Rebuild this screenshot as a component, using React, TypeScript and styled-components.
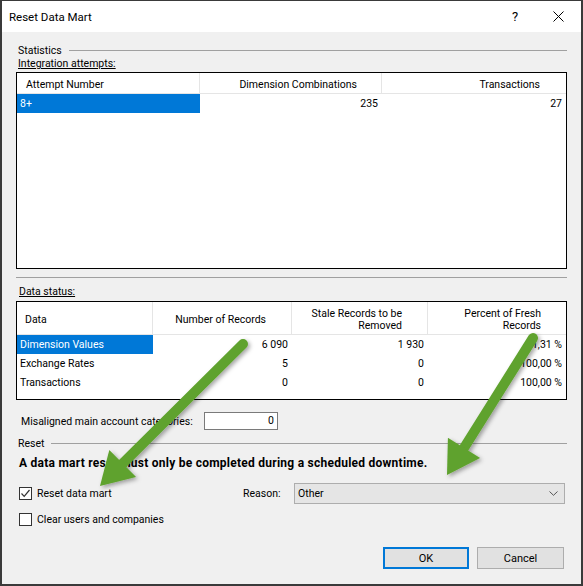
import React from "react";
import styled, { createGlobalStyle } from "styled-components";

const GlobalStyle = createGlobalStyle`
  html, body {
    margin: 0;
    padding: 0;
    background: #f0f0f0;
  }
  body {
    font-family: Roboto, "Noto Sans", sans-serif;
  }
`;

const UI_FONT = `Roboto, "Noto Sans", "Liberation Sans", sans-serif`;

const Window = styled.div`
  position: relative;
  width: 583px;
  height: 586px;
  box-sizing: border-box;
  border: 1px solid #3a3a3a;
  border-left-width: 2px;
  border-right-width: 2px;
  border-bottom-width: 2px;
  background: #f0f0f0;
  display: flex;
  flex-direction: column;
  overflow: hidden;
  font-family: ${UI_FONT};
  font-size: 10.5px;
  color: #000;
`;

const TitleBar = styled.div`
  height: 31px;
  flex: none;
  background: #fff;
  display: flex;
  align-items: center;
  padding-left: 7px;
`;

const TitleText = styled.div`
  flex: 1;
  font-size: 11.5px;
`;

const CaptionButton = styled.div<{ $w: number }>`
  width: ${(p) => p.$w}px;
  height: 31px;
  display: flex;
  align-items: center;
  justify-content: center;
  font-size: 13px;
`;

const Body = styled.div`
  flex: 1;
  display: flex;
  flex-direction: column;
  padding: 11px 14px 0 14px;
`;

const GroupHeading = styled.div<{ $mt?: number }>`
  display: flex;
  align-items: center;
  height: 14px;
  padding-left: 2px;
  margin-top: ${(p) => p.$mt ?? 0}px;
`;

const Rule = styled.div`
  flex: 1;
  height: 1px;
  background: #a0a0a0;
  margin-left: 7px;
`;

const Separator = styled.div<{ $mt: number }>`
  height: 1px;
  background: #a0a0a0;
  margin-top: ${(p) => p.$mt}px;
`;

const SubLabel = styled.div<{ $mt?: number; $pl?: number }>`
  height: 13px;
  line-height: 13px;
  padding-left: ${(p) => p.$pl ?? 2}px;
  margin-top: ${(p) => p.$mt ?? 0}px;
  text-decoration: underline;
`;

const ListView = styled.div<{ $h: number; $mt: number }>`
  height: ${(p) => p.$h}px;
  margin-top: ${(p) => p.$mt}px;
  box-sizing: border-box;
  border: 1px solid #000;
  background: #fff;
  overflow: hidden;
`;

const ListGrid = styled.div<{ $cols: string }>`
  display: grid;
  grid-template-columns: ${(p) => p.$cols};
`;

const HeadCell = styled.div<{ $h: number; $align?: "left" | "right"; $last?: boolean; $pad?: number }>`
  height: ${(p) => p.$h}px;
  box-sizing: border-box;
  border-bottom: 1px solid #e5e5e5;
  border-right: ${(p) => (p.$last ? "none" : "1px solid #e5e5e5")};
  display: flex;
  align-items: center;
  justify-content: ${(p) => (p.$align === "left" ? "flex-start" : "flex-end")};
  text-align: ${(p) => p.$align ?? "right"};
  padding: ${(p) => (p.$align === "left" ? `3px 0 0 ${p.$pad ?? 8}px` : `3px ${p.$pad ?? 25}px 0 0`)};
  line-height: 12px;
`;

const Cell = styled.div<{ $align?: "left" | "right"; $selected?: boolean }>`
  height: 19px;
  line-height: 19px;
  box-sizing: border-box;
  text-align: ${(p) => p.$align ?? "right"};
  padding: ${(p) => (p.$align === "left" ? "0 0 0 3px" : "0 4px 0 0")};
  background: ${(p) => (p.$selected ? "#0078d7" : "transparent")};
  color: ${(p) => (p.$selected ? "#fff" : "#000")};
  white-space: nowrap;
`;

const FieldRow = styled.div<{ $mt: number }>`
  display: flex;
  align-items: center;
  height: 18px;
  margin-top: ${(p) => p.$mt}px;
  padding-left: 5px;
`;

const FieldLabel = styled.div<{ $w: number }>`
  width: ${(p) => p.$w}px;
  flex: none;
`;

const NumberBox = styled.div`
  width: 74px;
  height: 18px;
  box-sizing: border-box;
  border: 1px solid #7a7a7a;
  background: #fff;
  text-align: right;
  padding-right: 3px;
  line-height: 16px;
`;

const Warning = styled.div<{ $mt: number }>`
  height: 14px;
  line-height: 14px;
  margin-top: ${(p) => p.$mt}px;
  padding-left: 3px;
  font-weight: 700;
  font-size: 12px;
  letter-spacing: 0.25px;
  white-space: nowrap;
`;

const OptionRow = styled.div<{ $mt: number; $h: number }>`
  display: flex;
  align-items: center;
  height: ${(p) => p.$h}px;
  margin-top: ${(p) => p.$mt}px;
`;

const CheckGroup = styled.label<{ $w?: number }>`
  display: flex;
  align-items: center;
  gap: 5px;
  padding-left: 3px;
  width: ${(p) => (p.$w ? `${p.$w}px` : "auto")};
  box-sizing: border-box;
  flex: none;
`;

const CheckBox = styled.span`
  width: 13px;
  height: 13px;
  box-sizing: border-box;
  border: 1px solid #333;
  background: #fff;
  display: flex;
  align-items: center;
  justify-content: center;
`;

const Select = styled.div`
  width: 271px;
  height: 21px;
  box-sizing: border-box;
  border: 1px solid #adadad;
  background: #e5e5e5;
  display: flex;
  align-items: center;
  justify-content: space-between;
  padding: 0 6px 0 3px;
`;

const ButtonRow = styled.div`
  display: flex;
  justify-content: flex-end;
  gap: 8px;
  margin-top: 21px;
  padding-right: 3px;
`;

const Button = styled.div<{ $default?: boolean; $w: number }>`
  width: ${(p) => p.$w}px;
  height: 22px;
  box-sizing: border-box;
  border: ${(p) => (p.$default ? "2px solid #0078d7" : "1px solid #adadad")};
  background: #e1e1e1;
  display: flex;
  align-items: center;
  justify-content: center;
  font-size: 11px;
`;

const Overlay = styled.svg`
  position: absolute;
  left: -2px;
  top: -1px;
  pointer-events: none;
`;

type Pt = [number, number];

function Arrow({ from, tip }: { from: Pt; tip: Pt }) {
  const headLen = 32;
  const headHalf = 19;
  const dx = tip[0] - from[0];
  const dy = tip[1] - from[1];
  const len = Math.hypot(dx, dy);
  const ux = dx / len;
  const uy = dy / len;
  const nx = -uy;
  const ny = ux;
  const bx = tip[0] - ux * headLen;
  const by = tip[1] - uy * headLen;
  const head = [
    [tip[0], tip[1]],
    [bx + nx * headHalf, by + ny * headHalf],
    [bx - nx * headHalf, by - ny * headHalf],
  ]
    .map((p) => p.join(","))
    .join(" ");
  return (
    <g filter="url(#arrowShadow)">
      <line
        x1={from[0]}
        y1={from[1]}
        x2={bx + ux * 2}
        y2={by + uy * 2}
        stroke="#5fa22d"
        strokeWidth={10}
        strokeLinecap="round"
      />
      <polygon points={head} fill="#5fa22d" />
    </g>
  );
}

const Check = () => (
  <svg width="11" height="11" viewBox="0 0 11 11">
    <path d="M1.5 5.5 L4.2 8.3 L9.5 2" fill="none" stroke="#333" strokeWidth="1.2" />
  </svg>
);

const Chevron = () => (
  <svg width="9" height="5" viewBox="0 0 9 5">
    <path d="M0.5 0.5 L4.5 4.3 L8.5 0.5" fill="none" stroke="#555" strokeWidth="1" />
  </svg>
);

const CloseGlyph = () => (
  <svg width="11" height="11" viewBox="0 0 11 11">
    <path d="M0.5 0.5 L10.5 10.5 M10.5 0.5 L0.5 10.5" stroke="#000" strokeWidth="1" />
  </svg>
);

export default function App() {
  return (
    <>
      <GlobalStyle />
      <Window>
        <TitleBar>
          <TitleText>Reset Data Mart</TitleText>
          <CaptionButton $w={40}>?</CaptionButton>
          <CaptionButton $w={46}>
            <CloseGlyph />
          </CaptionButton>
        </TitleBar>
        <Body>
          <GroupHeading>
            Statistics
            <Rule />
          </GroupHeading>
          <SubLabel>Integration attempts:</SubLabel>
          <ListView $h={197} $mt={2}>
            <ListGrid $cols="183px 182px 1fr">
              <HeadCell $h={21} $align="left" $pad={9}>
                Attempt Number
              </HeadCell>
              <HeadCell $h={21} $pad={24}>
                Dimension Combinations
              </HeadCell>
              <HeadCell $h={21} $last $pad={26}>
                Transactions
              </HeadCell>
              <Cell $align="left" $selected>
                8+
              </Cell>
              <Cell>235</Cell>
              <Cell>27</Cell>
            </ListGrid>
          </ListView>
          <Separator $mt={8} />
          <SubLabel $mt={7} $pl={3}>
            Data status:
          </SubLabel>
          <ListView $h={99} $mt={3}>
            <ListGrid $cols="136px 139px 136px 1fr">
              <HeadCell $h={33} $align="left">
                Data
              </HeadCell>
              <HeadCell $h={33}>Number of Records</HeadCell>
              <HeadCell $h={33}>
                Stale Records to be
                <br />
                Removed
              </HeadCell>
              <HeadCell $h={33} $last>
                Percent of Fresh
                <br />
                Records
              </HeadCell>

              <Cell $align="left" $selected>
                Dimension Values
              </Cell>
              <Cell>6 090</Cell>
              <Cell>1 930</Cell>
              <Cell>61,31 %</Cell>

              <Cell $align="left">Exchange Rates</Cell>
              <Cell>5</Cell>
              <Cell>0</Cell>
              <Cell>100,00 %</Cell>

              <Cell $align="left">Transactions</Cell>
              <Cell>0</Cell>
              <Cell>0</Cell>
              <Cell>100,00 %</Cell>
            </ListGrid>
          </ListView>

          <FieldRow $mt={12}>
            <FieldLabel $w={183}>Misaligned main account categories:</FieldLabel>
            <NumberBox>0</NumberBox>
          </FieldRow>

          <GroupHeading $mt={6}>
            Reset
            <Rule />
          </GroupHeading>
          <Warning $mt={6}>A data mart reset must only be completed during a scheduled downtime.</Warning>

          <OptionRow $mt={13} $h={21}>
            <CheckGroup $w={227}>
              <CheckBox>
                <Check />
              </CheckBox>
              Reset data mart
            </CheckGroup>
            <FieldLabel $w={51}>Reason:</FieldLabel>
            <Select>
              <span>Other</span>
              <Chevron />
            </Select>
          </OptionRow>

          <OptionRow $mt={8} $h={14}>
            <CheckGroup>
              <CheckBox />
              Clear users and companies
            </CheckGroup>
          </OptionRow>

          <ButtonRow>
            <Button $default $w={86}>
              OK
            </Button>
            <Button $w={87}>Cancel</Button>
          </ButtonRow>
        </Body>

        <Overlay width={583} height={586} viewBox="0 0 583 586">
          <defs>
            <filter id="arrowShadow" x="-20%" y="-20%" width="140%" height="140%">
              <feDropShadow dx="2" dy="2" stdDeviation="2" floodColor="#000" floodOpacity="0.35" />
            </filter>
          </defs>
          <Arrow from={[243, 344]} tip={[100, 486]} />
          <Arrow from={[533, 338]} tip={[447, 475]} />
        </Overlay>
      </Window>
    </>
  );
}
